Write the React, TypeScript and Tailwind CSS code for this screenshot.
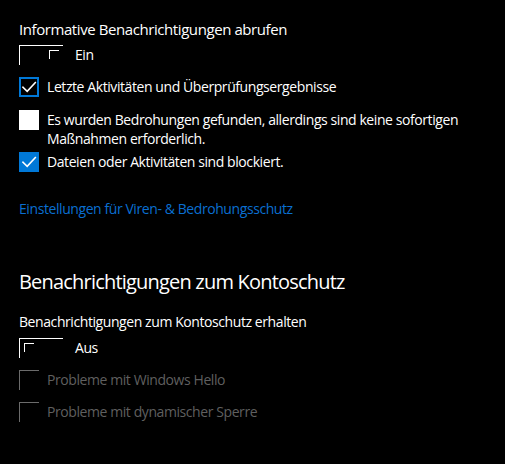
type CheckProps = {
  checked?: boolean
  filled?: boolean
  disabled?: boolean
}

function CheckMark() {
  return (
    <svg viewBox="0 0 20 20" className="absolute inset-0 h-5 w-5" fill="none">
      <path d="M4 10.2 L8.2 14.4 L16.3 5.6" stroke="#ffffff" strokeWidth="1.6" strokeLinecap="square" />
    </svg>
  )
}

// Windows-style checkbox in its looks: outlined+checked, filled+checked, blank white, disabled
function Check({ checked, filled, disabled }: CheckProps) {
  if (disabled) {
    return <span className="relative block h-5 w-5 shrink-0 border-l border-t border-[#6b6b6b]" />
  }
  if (checked && filled) {
    return (
      <span className="relative block h-5 w-5 shrink-0 bg-[#0078d7]">
        <CheckMark />
      </span>
    )
  }
  if (checked) {
    return (
      <span className="relative block h-5 w-5 shrink-0 border-2 border-[#0078d7]">
        <span className="absolute -inset-[2px]">
          <CheckMark />
        </span>
      </span>
    )
  }
  return <span className="block h-5 w-5 shrink-0 bg-white" />
}

// toggle switch drawn as a half-rendered outline with its knob corner
function Toggle({ on }: { on: boolean }) {
  return (
    <span className="relative block h-5 w-11 shrink-0 border-l border-t border-white">
      <span
        className={
          on
            ? 'absolute left-[29px] top-[4px] h-[9px] w-[10px] border-l border-t border-white'
            : 'absolute left-[4px] top-[4px] h-[9px] w-[10px] border-l border-t border-white'
        }
      />
    </span>
  )
}

function CheckRow({ label, ...props }: CheckProps & { label: string }) {
  return (
    <div className="flex items-start gap-[8px]">
      <Check {...props} />
      <span className={props.disabled ? 'leading-[20px] text-[#5f5f5f]' : 'leading-[19px] text-white'}>{label}</span>
    </div>
  )
}

export default function App() {
  return (
    <div
      className="h-[464px] w-[505px] overflow-hidden bg-black pl-[19px] pt-[19px] text-[14px] tracking-[-0.03em] text-white"
      style={{ fontFamily: '"Open Sans", "Noto Sans", sans-serif' }}
    >
      <p className="text-[15px] leading-[20px]">Informative Benachrichtigungen abrufen</p>

      <div className="mt-[6px] flex items-center gap-[12px]">
        <Toggle on />
        <span className="leading-[20px]">Ein</span>
      </div>

      <div className="mt-[12px] flex flex-col">
        <CheckRow checked label="Letzte Aktivitäten und Überprüfungsergebnisse" />
        <div className="mt-[13px] flex items-start gap-[8px]">
          <Check />
          <span className="leading-[19px]">
            Es wurden Bedrohungen gefunden, allerdings sind keine sofortigen
            <br />
            Maßnahmen erforderlich.
          </span>
        </div>
        <div className="mt-[4px]">
          <CheckRow checked filled label="Dateien oder Aktivitäten sind blockiert." />
        </div>
      </div>

      <a className="mt-[27px] block leading-[20px] text-[#0a6fd1]">Einstellungen für Viren- &amp; Bedrohungsschutz</a>

      <h2 className="mt-[49px] text-[20px] leading-[28px] tracking-[-0.04em]">Benachrichtigungen zum Kontoschutz</h2>

      <p className="mt-[16px] leading-[20px]">Benachrichtigungen zum Kontoschutz erhalten</p>

      <div className="mt-[6px] flex items-center gap-[12px]">
        <Toggle on={false} />
        <span className="leading-[20px]">Aus</span>
      </div>

      <div className="mt-[12px] flex flex-col gap-[12px]">
        <CheckRow disabled label="Probleme mit Windows Hello" />
        <CheckRow disabled label="Probleme mit dynamischer Sperre" />
      </div>
    </div>
  )
}
